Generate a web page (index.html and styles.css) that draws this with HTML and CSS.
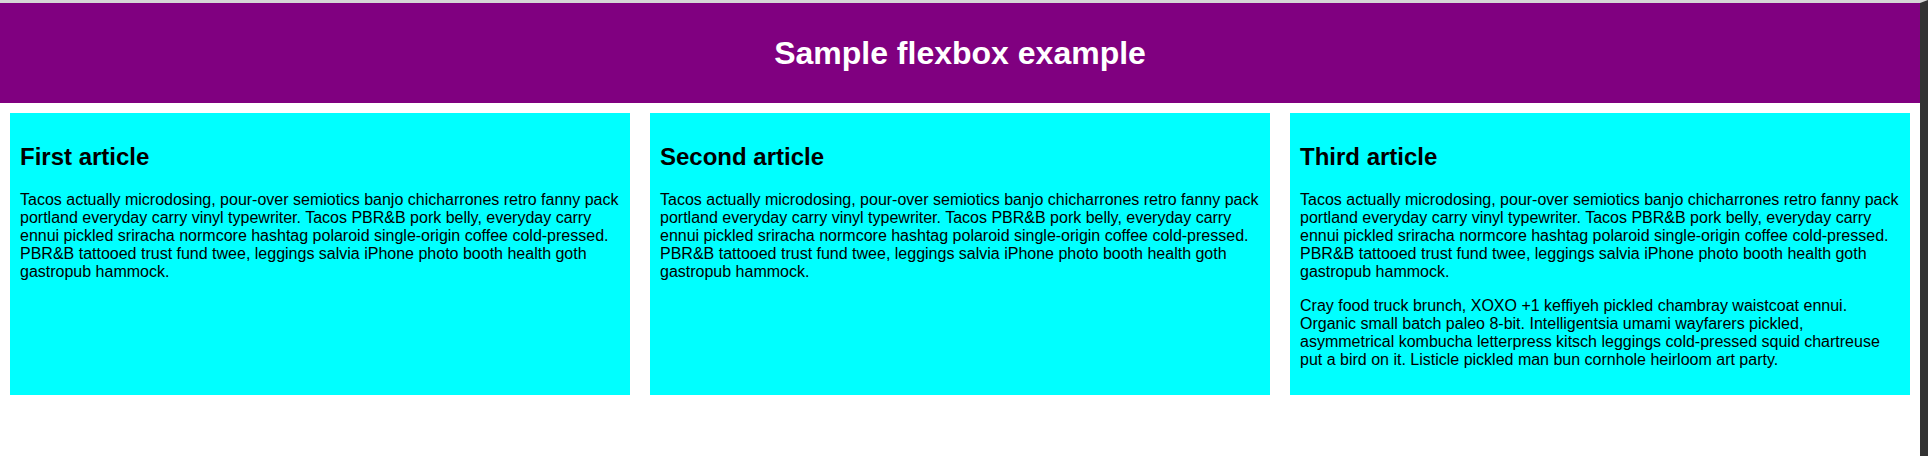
FILE: index.html
```html
<!DOCTYPE html>
<html lang="en">
<head>
  <meta charset="UTF-8">
  <meta name="viewport" content="width=device-width, initial-scale=1.0">
  <title>Flexbox 0 - starting code</title>
  <link rel="stylesheet" href="styles.css">
</head>
<body>

  <header>
    <h1>Sample flexbox example</h1>
  </header>

  <section>
    <article>
      <h2>First article</h2>
      <p>Tacos actually microdosing, pour-over semiotics banjo chicharrones retro fanny pack portland everyday carry vinyl typewriter. Tacos PBR&amp;B pork belly, everyday carry ennui pickled sriracha normcore hashtag polaroid single-origin coffee cold-pressed. PBR&amp;B tattooed trust fund twee, leggings salvia iPhone photo booth health goth gastropub hammock.</p>
    </article>

    <article>
      <h2>Second article</h2>
      <p>Tacos actually microdosing, pour-over semiotics banjo chicharrones retro fanny pack portland everyday carry vinyl typewriter. Tacos PBR&amp;B pork belly, everyday carry ennui pickled sriracha normcore hashtag polaroid single-origin coffee cold-pressed. PBR&amp;B tattooed trust fund twee, leggings salvia iPhone photo booth health goth gastropub hammock.</p>
    </article>

    <article>
      <h2>Third article</h2>
      <p>Tacos actually microdosing, pour-over semiotics banjo chicharrones retro fanny pack portland everyday carry vinyl typewriter. Tacos PBR&amp;B pork belly, everyday carry ennui pickled sriracha normcore hashtag polaroid single-origin coffee cold-pressed. PBR&amp;B tattooed trust fund twee, leggings salvia iPhone photo booth health goth gastropub hammock.</p>

      <p>Cray food truck brunch, XOXO +1 keffiyeh pickled chambray waistcoat ennui. Organic small batch paleo 8-bit. Intelligentsia umami wayfarers pickled, asymmetrical kombucha letterpress kitsch leggings cold-pressed squid chartreuse put a bird on it. Listicle pickled man bun cornhole heirloom art party.</p>
    </article>
  </section>

</body>
</html>
```

FILE: styles.css
```css
html { font-family: Arial, "Liberation Sans", sans-serif; background: #fff; }
body { margin: 0; min-height: 100vh; box-sizing: border-box; border-top: 3px solid #d6d6d6; border-right: 8px solid #333; line-height: 18px; }
header { background: purple; height: 100px; }
h1 { text-align: center; color: white; line-height: 100px; margin: 0; }
h2 { line-height: normal; }
section { display: flex; }
article { flex: 1; padding: 10px; margin: 10px; background: aqua; }
```
